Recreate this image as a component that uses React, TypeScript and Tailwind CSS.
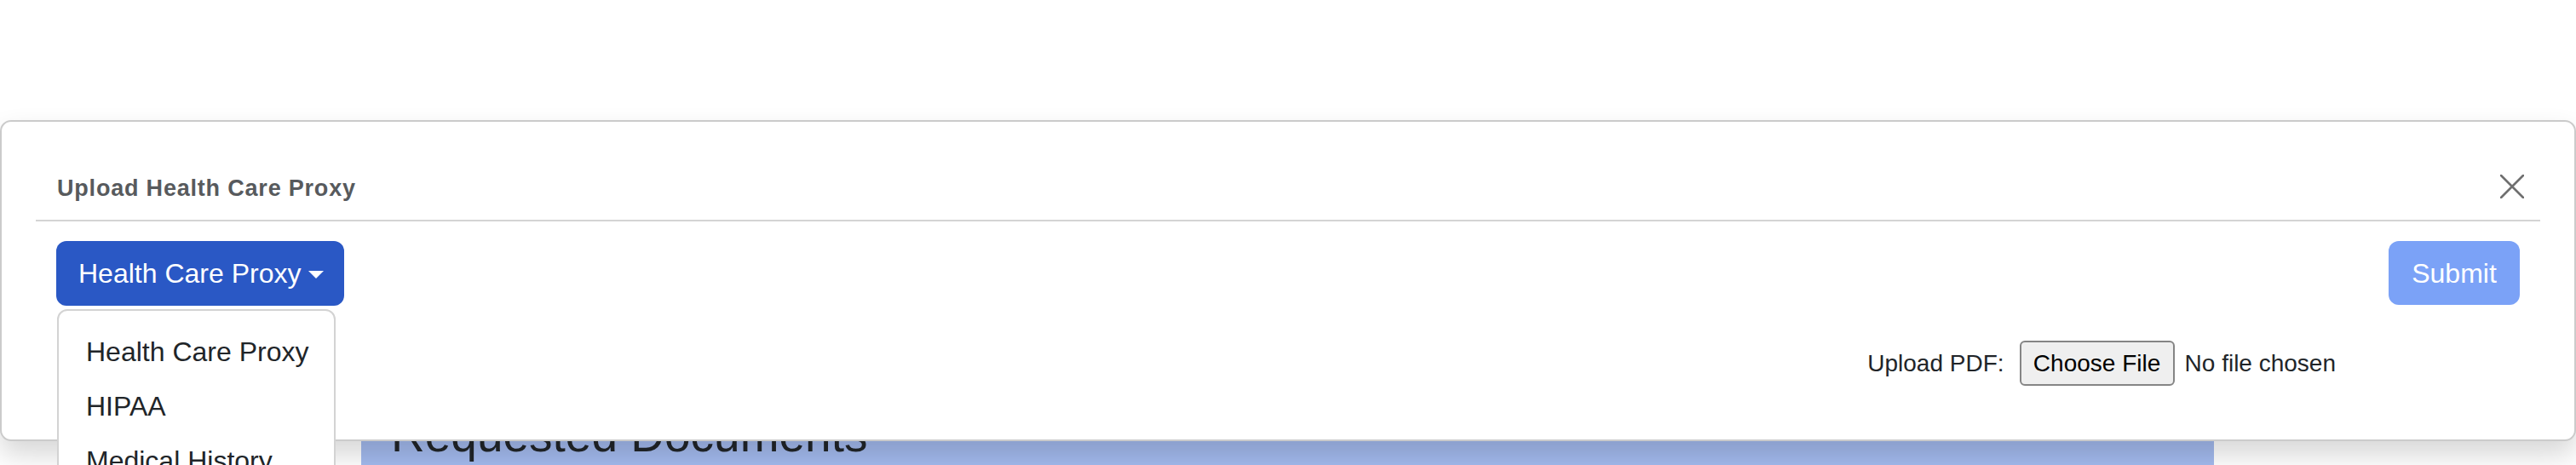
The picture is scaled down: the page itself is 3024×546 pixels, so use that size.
import React from "react";

const docTypes = ["Health Care Proxy", "HIPAA", "Medical History", "Other"];

const CloseIcon = () => (
  <svg width="28" height="28" viewBox="0 0 28 28" className="mb-[4px]">
    <path d="M1 1 L27 27 M27 1 L1 27" stroke="#6f6f6f" strokeWidth="2.6" strokeLinecap="round" />
  </svg>
);

const App: React.FC = () => {
  return (
    <div className="relative h-[546px] w-[3024px] overflow-hidden bg-white font-['Liberation_Sans',Arial,sans-serif]">
      {/* page content behind the modal */}
      <div className="ml-[424px] mt-[460px] h-[200px] w-[2175px] bg-[#a3baee] px-[35px] pt-[17px]">
        <h3 className="text-[55px] leading-[68px] text-[#212529]">Requested Documents</h3>
      </div>

      {/* modal */}
      <div className="absolute left-0 top-[141px] w-full rounded-[13px] border-2 border-[#cbcbcb] bg-white shadow-[0_16px_32px_rgba(0,0,0,0.16)]">
        <div className="mx-[40px] flex items-center justify-between border-b-2 border-[#d4d4d4] pb-[17px] pl-[25px] pr-[19px] pt-[58px]">
          <h5 className="text-[27px] font-bold leading-[40px] tracking-[0.8px] text-[#575a5d]">Upload Health Care Proxy</h5>
          <CloseIcon />
        </div>

        <div className="px-[64px] pb-[63px] pt-[23px]">
          <div className="flex items-start justify-between">
            <div className="relative">
              <button className="flex h-[76px] items-center whitespace-nowrap rounded-[12px] bg-[#2a58c5] pl-[26px] pr-[24px] text-[32px] text-white">
                Health Care Proxy
                <span className="ml-[9px] mt-[2px] border-x-[9px] border-t-[9px] border-x-transparent border-t-white" />
              </button>
              <div className="absolute left-[1px] top-[80px] z-10 w-[327px] rounded-[12px] border-2 border-[#d3d3d3] bg-white py-[16px]">
                {docTypes.map((t) => (
                  <div key={t} className="whitespace-nowrap px-[32px] py-[8px] text-[32px] leading-[48px] text-[#212529]">
                    {t}
                  </div>
                ))}
              </div>
            </div>
            <button className="h-[75px] w-[154px] rounded-[12px] bg-[#7ba2f7] text-[32px] text-white">Submit</button>
          </div>

          <div className="mt-[41px] flex h-[53px] items-center justify-end pr-[216px] text-[28px] text-[#212529]">
            <span>Upload PDF:</span>
            <span className="ml-[18px] flex h-[53px] w-[182px] items-center justify-center rounded-[6px] border-2 border-[#858585] bg-[#efefef] text-black">
              Choose File
            </span>
            <span className="ml-[12px]">No file chosen</span>
          </div>
        </div>
      </div>
    </div>
  );
};

export default App;
